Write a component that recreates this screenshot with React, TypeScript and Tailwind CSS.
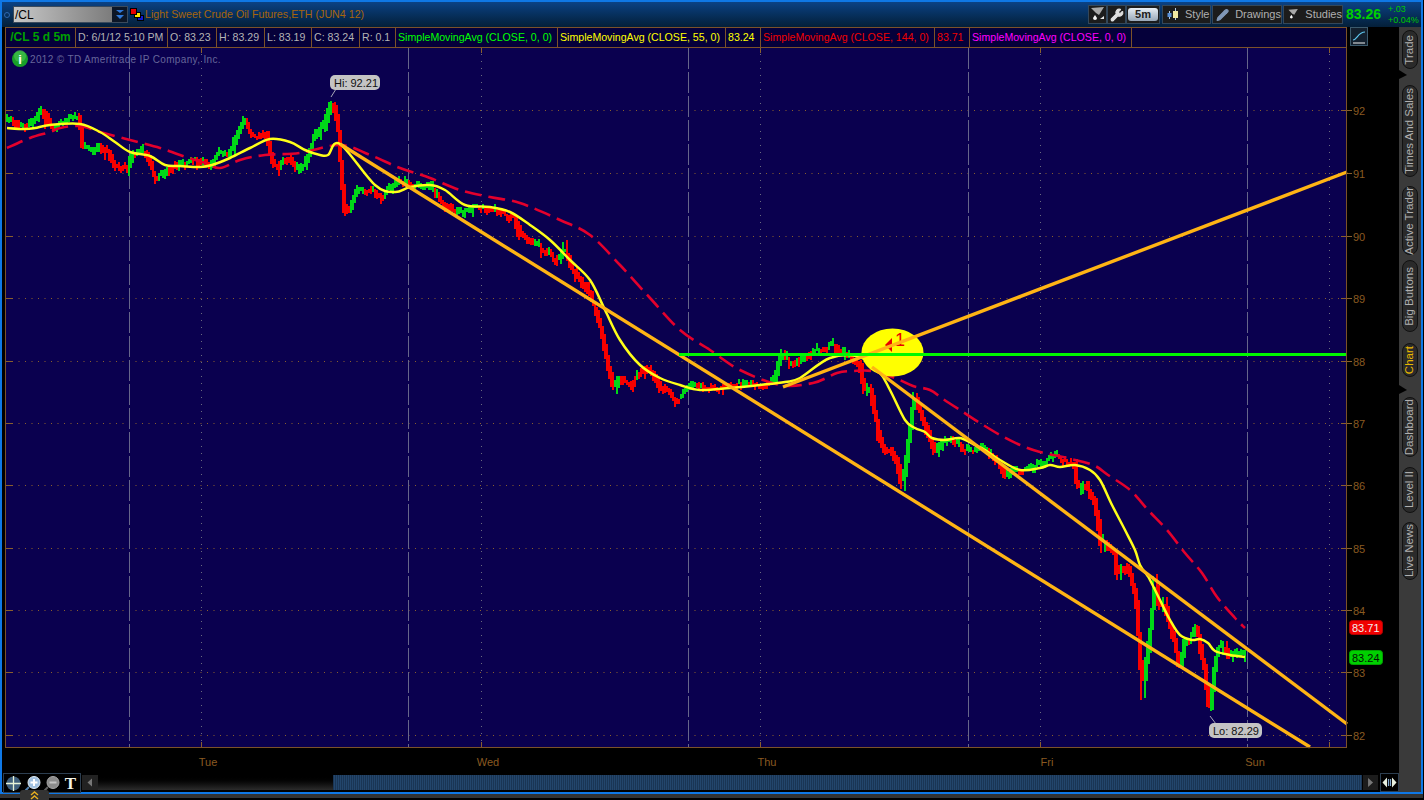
import { Pencil, Wrench } from "lucide-react";

const priceKeys: [number, number][] = [
  [7,122],[12,118],[20,127],[25,124],[32,122],[36,118],[43,112],[48,122],[52,129],[60,123],[75,120],[80,122],[83,150],[92,152],[100,143],[108,147],[115,162],[128,168],[133,155],[140,152],[148,158],[155,178],[163,175],[172,163],[180,166],[195,160],[205,162],[210,165],[218,155],[230,153],[235,140],[245,120],[252,130],[262,132],[268,135],[272,160],[278,165],[285,158],[290,160],[297,170],[305,165],[315,140],[325,125],[332,98],[338,115],[342,170],[345,205],[350,210],[358,190],[372,190],[385,195],[395,185],[400,180],[410,185],[430,190],[445,205],[460,215],[475,207],[490,208],[505,213],[515,215],[520,235],[535,245],[545,250],[560,262],[565,245],[570,262],[590,295],[596,310],[602,330],[610,375],[615,390],[620,375],[630,380],[640,370],[650,365],[660,385],[675,397],[685,395],[695,385],[710,385],[730,385],[750,383],[775,382],[782,355],[790,365],[800,360],[815,350],[832,345],[840,352],[850,358],[860,362],[865,395],[870,385],[880,435],[885,450],[890,445],[897,460],[903,490],[908,450],[915,395],[920,410],[928,430],[935,455],[942,445],[950,440],[965,450],[985,452],[1000,465],[1008,480],[1015,470],[1030,470],[1045,462],[1058,455],[1075,465],[1078,490],[1085,480],[1095,500],[1100,530],[1102,555],[1105,540],[1115,550],[1118,575],[1122,560],[1130,570],[1137,600],[1143,695],[1148,650],[1152,620],[1155,578],[1160,610],[1165,600],[1170,625],[1175,640],[1180,670],[1185,640],[1190,640],[1197,628],[1200,645],[1205,670],[1210,716],[1215,670],[1218,650],[1225,645],[1230,660],[1238,655],[1245,658],
];

const sma55: [number, number][] = [
  [7,128],[25,129],[35,128],[50,125],[80,124],[100,132],[115,142],[130,152],[150,156],[165,165],[180,166],[200,167],[212,165],[230,158],[250,148],[270,139],[290,142],[305,150],[320,155],[328,155],[340,144],[375,185],[395,192],[410,187],[430,185],[445,190],[465,205],[490,207],[510,212],[530,225],[550,240],[570,260],[590,280],[605,310],[620,340],[640,365],[660,378],[680,385],[700,390],[730,388],[760,385],[785,382],[800,378],[830,358],[860,357],[880,373],[890,390],[905,420],[915,428],[925,432],[932,438],[945,440],[960,438],[975,445],[985,450],[1000,460],[1020,470],[1040,468],[1050,465],[1060,467],[1075,465],[1090,470],[1100,480],[1112,505],[1125,530],[1135,550],[1140,565],[1147,575],[1150,580],[1160,600],[1170,620],[1180,635],[1192,640],[1200,639],[1208,643],[1215,651],[1230,655],[1245,657],
];

const sma144: [number, number][] = [
  [7,148],[30,138],[50,132],[60,128],[80,126],[100,132],[130,140],[160,148],[180,155],[205,163],[220,168],[240,160],[265,155],[300,153],[340,145],[370,155],[400,168],[430,178],[460,190],[490,197],[520,203],[560,220],[590,235],[620,265],[650,298],[680,330],[710,350],[740,370],[780,385],[813,383],[837,373],[853,371],[872,371],[895,378],[913,386],[930,390],[943,399],[963,412],[980,423],[1000,435],[1020,445],[1040,452],[1067,458],[1093,465],[1108,475],[1130,490],[1148,510],[1167,530],[1185,553],[1202,573],[1217,597],[1235,618],[1245,628],
];

const gridPrices = [
  { label: "92", y: 110 },
  { label: "91", y: 173 },
  { label: "90", y: 236 },
  { label: "89", y: 298 },
  { label: "88", y: 361 },
  { label: "87", y: 423 },
  { label: "86", y: 485 },
  { label: "85", y: 548 },
  { label: "84", y: 610 },
  { label: "83", y: 672 },
  { label: "82", y: 735 },
];

const dayLines = [129, 408, 688, 968, 1247];
const noonLines = [201, 481, 760, 1040, 1329];
const days = [
  { label: "Tue", x: 208 },
  { label: "Wed", x: 488 },
  { label: "Thu", x: 767 },
  { label: "Fri", x: 1047 },
  { label: "Sun", x: 1255 },
];

function interp(keys: [number, number][], x: number) {
  if (x <= keys[0][0]) return keys[0][1];
  for (let i = 1; i < keys.length; i++) {
    if (x <= keys[i][0]) {
      const [x0, y0] = keys[i - 1];
      const [x1, y1] = keys[i];
      return y0 + ((y1 - y0) * (x - x0)) / (x1 - x0);
    }
  }
  return keys[keys.length - 1][1];
}

// catmull-rom through the hand-read points, the averages are smooth in the picture
function toCurve(keys: [number, number][]) {
  let d = `M${keys[0][0]} ${keys[0][1]}`;
  for (let i = 0; i < keys.length - 1; i++) {
    const p0 = keys[Math.max(i - 1, 0)];
    const p1 = keys[i];
    const p2 = keys[i + 1];
    const p3 = keys[Math.min(i + 2, keys.length - 1)];
    const c1x = p1[0] + (p2[0] - p0[0]) / 6;
    const c1y = p1[1] + (p2[1] - p0[1]) / 6;
    const c2x = p2[0] - (p3[0] - p1[0]) / 6;
    const c2y = p2[1] - (p3[1] - p1[1]) / 6;
    d += `C${c1x.toFixed(1)} ${c1y.toFixed(1)} ${c2x.toFixed(1)} ${c2y.toFixed(1)} ${p2[0]} ${p2[1]}`;
  }
  return d;
}

// fake OHLC bars walked along the hand-read price curve
function buildBars() {
  let seed = 71;
  const rand = () => {
    seed = (seed * 16807) % 2147483647;
    return seed / 2147483647;
  };
  let drift = 0;
  let red = "";
  let green = "";
  for (let x = 7; x <= 1245; x += 2) {
    drift = drift * 0.72 + (rand() - 0.5) * 6;
    const a = interp(priceKeys, x - 2);
    const b = interp(priceKeys, x + 2);
    const spike = rand() < 0.1 ? rand() * 7 : 0;
    const top = Math.min(a, b) + drift - 1 - rand() * 3;
    const bottom = Math.max(a, b) + drift + 1 + rand() * 3 + spike;
    const seg = `M${x} ${top.toFixed(0)}V${bottom.toFixed(0)}`;
    if (b - a + drift * 1.5 < 0) green += seg;
    else red += seg;
  }
  return { red, green };
}

const bars = buildBars();

const infoCells = [
  { text: "D: 6/1/12 5:10 PM", color: "text-[#b4b4b4]", width: "w-[92px]" },
  { text: "O: 83.23", color: "text-[#b4b4b4]", width: "w-[49px]" },
  { text: "H: 83.29", color: "text-[#b4b4b4]", width: "w-[48px]" },
  { text: "L: 83.19", color: "text-[#b4b4b4]", width: "w-[47px]" },
  { text: "C: 83.24", color: "text-[#b4b4b4]", width: "w-[48px]" },
  { text: "R: 0.1", color: "text-[#b4b4b4]", width: "w-[36px]" },
  { text: "SimpleMovingAvg (CLOSE, 0, 0)", color: "text-[#00ff00]", width: "w-[162px]" },
  { text: "SimpleMovingAvg (CLOSE, 55, 0)", color: "text-[#ffff00]", width: "w-[168px]" },
  { text: "83.24", color: "text-[#ffff00]", width: "w-[35px]" },
  { text: "SimpleMovingAvg (CLOSE, 144, 0)", color: "text-[#f00000]", width: "w-[174px]" },
  { text: "83.71", color: "text-[#f00000]", width: "w-[35px]" },
  { text: "SimpleMovingAvg (CLOSE, 0, 0)", color: "text-[#ff00ff]", width: "w-[162px]" },
];

const tabs = [
  { label: "Trade", cls: "mt-[3px] h-[39px]" },
  { label: "Times And Sales", cls: "mt-[16px] h-[92px]" },
  { label: "Active Trader", cls: "mt-[9px] h-[69px]" },
  { label: "Big Buttons", cls: "mt-[5px] h-[72px]" },
  { label: "Chart", cls: "mt-[11px] h-[34px]", active: true },
  { label: "Dashboard", cls: "mt-[20px] h-[60px]" },
  { label: "Level II", cls: "mt-[10px] h-[46px]" },
  { label: "Live News", cls: "mt-[9px] h-[58px]" },
];

function ToolButton({ label, width, icon }: { label: string; width: string; icon: React.ReactNode }) {
  return (
    <div className={`${width} h-[19px] flex items-center gap-[6px] pl-[3px] bg-[#1c1c1c] border border-[#33475a] text-[#b0b0b0] text-[11px]`}>
      {icon}
      <span>{label}</span>
    </div>
  );
}

function Flask({ arrows }: { arrows?: boolean }) {
  return (
    <svg width="17" height="15" viewBox="0 0 17 15">
      <polygon points="2,1 15,0 10,8 7,6" fill="#a8a8a8" />
      <path d="M6 8 L8 11 A2 2 0 1 1 4 11 Z" fill="#f4f4f4" />
      {arrows && <path d="M11 12 L15 12 L15 9 Z" fill="#e8e8e8" />}
    </svg>
  );
}

function Chart() {
  return (
    <svg width="1397" height="728" viewBox="2 47 1397 728" className="block" fontFamily="'Liberation Sans', sans-serif">
      <rect x="5" y="47" width="1342" height="700" fill="#0a004f" />

      {gridPrices.map((p) => (
        <g key={p.label}>
          <line x1="12" x2="1340" y1={p.y + 0.5} y2={p.y + 0.5} stroke="#8a5f2c" strokeDasharray="1 5.5" />
          <line x1="6" x2="12" y1={p.y + 0.5} y2={p.y + 0.5} stroke="#8a5f2c" />
          <line x1="1341" x2="1352" y1={p.y + 0.5} y2={p.y + 0.5} stroke="#8a5f2c" />
          <text x="1353" y={p.y + 4.5} fontSize="11" fill="#8a5a20">{p.label}</text>
        </g>
      ))}
      {dayLines.map((x) => (
        <line key={x} x1={x + 0.5} x2={x + 0.5} y1="48" y2="747" stroke="#66668a" strokeDasharray="21 3" />
      ))}
      {noonLines.map((x) => (
        <g key={x}>
          <line x1={x + 0.5} x2={x + 0.5} y1="54" y2="741" stroke="#6a6a80" strokeDasharray="1 6" />
          <line x1={x + 0.5} x2={x + 0.5} y1="47" y2="53" stroke="#8a5f2c" />
          <line x1={x + 0.5} x2={x + 0.5} y1="742" y2="747" stroke="#8a5f2c" />
        </g>
      ))}

      <path d={bars.red} stroke="#f80000" strokeWidth="2" shapeRendering="crispEdges" />
      <path d={bars.green} stroke="#00d818" strokeWidth="2" shapeRendering="crispEdges" />

      <path d={toCurve(sma144)} fill="none" stroke="#e4002c" strokeWidth="2.6" strokeDasharray="17 7" />
      <path d={toCurve(sma55)} fill="none" stroke="#ffff18" strokeWidth="2.5" strokeLinejoin="round" />

      <ellipse cx="892.5" cy="352.5" rx="31" ry="24" fill="#ffff00" />
      <polygon points="885,345 892,338 892,352" fill="#e80000" />
      <text x="895" y="346" fontSize="18" fill="#e80000">1</text>

      <g stroke="#ffb414" strokeWidth="3.4" fill="none">
        <line x1="340" y1="144" x2="1310" y2="747" />
        <line x1="872" y1="367" x2="1347" y2="724" />
        <line x1="783" y1="387" x2="1347" y2="172" />
      </g>
      <line x1="679" y1="354.5" x2="1347" y2="354.5" stroke="#00f800" strokeWidth="3" />

      <rect x="5.5" y="47.5" width="1341" height="700" fill="none" stroke="#7c5229" />

      <circle cx="20" cy="59" r="8" fill="#18a028" />
      <circle cx="20" cy="56" r="6" fill="#52c85a" opacity="0.55" />
      <text x="20" y="64" textAnchor="middle" fontSize="13" fontWeight="700" fill="#fff">i</text>
      <text x="30" y="63" fontSize="10" letterSpacing="0.35" fill="#66669a">2012 © TD Ameritrade IP Company, Inc.</text>

      <line x1="331" y1="97" x2="336" y2="89" stroke="#a8a8b8" />
      <rect x="330" y="75" width="50" height="15" rx="5" fill="#c4c4c4" />
      <text x="334" y="86.5" fontSize="11" fill="#101010">Hi: 92.21</text>

      <line x1="1210" y1="716" x2="1216" y2="724" stroke="#a8a8b8" />
      <rect x="1209" y="723" width="53" height="15" rx="5" fill="#c4c4c4" />
      <text x="1213" y="734.5" fontSize="11" fill="#101010">Lo: 82.29</text>

      <rect x="1349.5" y="620.5" width="33" height="14" rx="3" fill="#f00000" stroke="#b00000" />
      <text x="1352" y="631.5" fontSize="11" fill="#f0f0f0">83.71</text>
      <rect x="1349.5" y="650.5" width="33" height="14" rx="3" fill="#00d000" stroke="#00a000" />
      <text x="1352" y="661.5" fontSize="11" fill="#041004">83.24</text>

      {days.map((d) => (
        <text key={d.label} x={d.x} y="766" textAnchor="middle" fontSize="11" fill="#8a5a20">{d.label}</text>
      ))}
    </svg>
  );
}

export default function App() {
  return (
    <div className="relative w-[1424px] h-[800px] overflow-hidden bg-black font-['Liberation_Sans',sans-serif]">
      <div className="w-[1423px] h-[794px] flex flex-col border-2 border-[#0f78e6]">
        {/* Symbol bar */}
        <div className="h-[25px] flex items-center bg-gradient-to-b from-[#0b4285] to-[#041f39]">
          <div className="ml-[2px] w-[6px] h-[6px] rounded-full border border-[#2f68b0]" />
          <div className="ml-[3px] w-[115px] h-[17px] flex border border-[#3a4a5c]">
            <div className="flex-1 flex items-center pl-[1px] bg-gradient-to-r from-[#c8c8c8] to-[#7c7c7c] text-[12px] text-black">/CL</div>
            <div className="w-[15px] flex items-center justify-center bg-[#0c1626]">
              <svg width="10" height="11" viewBox="0 0 10 11">
                <path d="M1 1 L5 4 L9 1 Z M1 6 L5 10 L9 6 Z" fill="#2f78d8" />
              </svg>
            </div>
          </div>
          <svg width="14" height="13" viewBox="0 0 14 13" className="ml-[2px]">
            <rect x="7.5" y="7.5" width="6" height="5" fill="#1018d0" stroke="#000" />
            <rect x="4.5" y="4.5" width="6" height="5" fill="#ffe800" stroke="#000" />
            <rect x="0.5" y="0.5" width="6" height="6" fill="#e80000" stroke="#000" />
          </svg>
          <span className="ml-[1px] text-[10.7px] text-[#a8650c]">Light Sweet Crude Oil Futures,ETH (JUN4 12)</span>

          <div className="ml-auto flex items-center">
            <div className="w-[19px] h-[19px] flex items-center justify-center bg-[#1c1c1c] border border-[#33475a]"><Flask arrows /></div>
            <div className="w-[19px] h-[19px] flex items-center justify-center bg-[#1c1c1c] border border-[#33475a]">
              <Wrench size={14} className="text-[#e0e0e0] fill-[#e0e0e0]" />
            </div>
            <div className="w-[34px] h-[19px] flex items-center justify-center bg-[#1c1c1c] border border-[#33475a]">
              <div className="w-[30px] h-[13px] rounded-[3px] bg-gradient-to-b from-[#e8eef4] to-[#98a8b8] text-center text-[11px] leading-[13px] font-bold text-[#202020]">5m</div>
            </div>
            <div className="ml-[2px] flex gap-px">
              <ToolButton
                label="Style"
                width="w-[49px]"
                icon={
                  <svg width="13" height="13" viewBox="0 0 13 13">
                    <path d="M3.5 3V11M9.5 0V12" stroke="#b0c8e0" />
                    <rect x="1.5" y="5" width="4" height="4" fill="#5890d8" />
                    <rect x="7" y="3" width="5" height="7" fill="#f0e8a0" />
                  </svg>
                }
              />
              <ToolButton label="Drawings" width="w-[70px]" icon={<Pencil size={14} className="text-[#8098b8] fill-[#8098b8]" />} />
              <ToolButton label="Studies" width="w-[60px]" icon={<Flask />} />
            </div>
            <span className="ml-[3px] w-[42px] text-[14px] font-bold text-[#00d000]">83.26</span>
            <div className="w-[33px] text-[9px] leading-[10.5px] text-[#00c800]">
              <div>+.03</div>
              <div>+0.04%</div>
            </div>
          </div>
        </div>

        <div className="flex flex-1">
          <div className="w-[1397px] flex flex-col">
            {/* Study readouts */}
            <div className="h-[20px] flex">
              <div className="ml-[3px] w-[1342px] flex border-t border-x border-[#7c5229] bg-[#05003a] text-[10.6px] leading-[19px] whitespace-nowrap">
                <div className="w-[70px] text-center text-[12px] font-bold text-[#00a000] border-r border-[#7c5229]">/CL 5 d 5m</div>
                {infoCells.map((cell, i) => (
                  <div key={i} className={`${cell.width} pl-[2px] ${cell.color} border-r border-[#7c5229]`}>{cell.text}</div>
                ))}
              </div>
              <div className="ml-[3px] w-[18px] h-[19px] flex items-center justify-center bg-[#13202e] border border-[#3c5a6c]">
                <svg width="14" height="14" viewBox="0 0 14 14">
                  <path d="M1 10 C5 10 6 2 13 2" fill="none" stroke="#60c8f0" strokeWidth="1.2" />
                  <path d="M1 13H13" stroke="#f0f0f0" />
                </svg>
              </div>
            </div>

            <Chart />

            {/* Bottom scroller */}
            <div className="h-[17px] flex items-start">
              <div className="ml-[1px] -mt-[2px] flex border border-[#2c3e50] bg-black">
                <div className="w-[19px] h-[18px] flex items-center justify-center">
                  <svg width="17" height="17" viewBox="0 0 17 17">
                    <circle cx="8.5" cy="8.5" r="7" fill="#40607c" />
                    <path d="M8.5 1V16M1 8.5H16" stroke="#e8f4d8" strokeWidth="1.3" />
                  </svg>
                </div>
                <div className="w-[19px] h-[18px] flex items-center justify-center">
                  <svg width="17" height="17" viewBox="0 0 17 17">
                    <path d="M5 12L1.5 15.5" stroke="#5080b0" strokeWidth="2" />
                    <circle cx="10" cy="7.5" r="6" fill="#a0c0e0" stroke="#e0ecf4" />
                    <path d="M10 4V11M6.5 7.5H13.5" stroke="#fff" strokeWidth="2" />
                  </svg>
                </div>
                <div className="w-[19px] h-[18px] flex items-center justify-center">
                  <svg width="17" height="17" viewBox="0 0 17 17">
                    <path d="M5 12L1.5 15.5" stroke="#606060" strokeWidth="2" />
                    <circle cx="10" cy="7.5" r="6" fill="#8c8c8c" stroke="#a8a8a8" />
                    <path d="M6.5 7.5H13.5" stroke="#c4c4c4" strokeWidth="2" />
                  </svg>
                </div>
                <div className="w-[19px] h-[18px] flex items-center justify-center text-[17px] leading-[17px] font-bold text-[#f4f4e8] font-['Liberation_Serif',serif]">T</div>
              </div>
              <div className="ml-[1px] w-[16px] h-[15px] flex items-center justify-center bg-[#222]">
                <div className="w-[5px] h-[9px] bg-[#777] [clip-path:polygon(100%_0,0_50%,100%_100%)]" />
              </div>
              <div className="w-[236px] h-[15px] bg-gradient-to-b from-[#000] to-[#2c2c2c]" />
              <div className="w-[1031px] h-[15px] bg-[#1a3554] bg-[repeating-linear-gradient(90deg,#1a3554_0px,#1a3554_1px,#23466c_1px,#23466c_2px)]" />
              <div className="ml-px w-[15px] h-[15px] flex items-center justify-center bg-[#1c1c1c]">
                <div className="w-[5px] h-[9px] bg-[#777] [clip-path:polygon(0_0,100%_50%,0_100%)]" />
              </div>
              <div className="ml-[2px] -mt-[2px] w-[19px] h-[19px] flex items-center justify-center border border-[#2c3e50]">
                <svg width="15" height="11" viewBox="0 0 15 11">
                  <path d="M5 0.5V10.5L0.5 5.5Z M10 0.5V10.5L14.5 5.5Z" fill="#e8f0e0" />
                  <path d="M6.5 2V9M8.5 2V9" stroke="#80a8d0" strokeWidth="1.2" />
                </svg>
              </div>
            </div>
          </div>

          {/* Side tabs */}
          <div className="relative w-[22px] flex flex-col items-center bg-[#3a3a3a]">
            {tabs.map((tab) => (
              <div
                key={tab.label}
                className={`${tab.cls} w-[16px] flex items-center justify-center rounded-[8px] bg-[#2a2a2a] border border-[#111] text-[11.5px] ${tab.active ? "text-[#e8b800]" : "text-[#b0b0b0]"}`}
              >
                <span className="[writing-mode:vertical-rl] rotate-180 whitespace-nowrap">{tab.label}</span>
              </div>
            ))}
            <div className="absolute left-0 top-[43px] w-[8px] h-[9px] bg-black [clip-path:polygon(0_0,100%_55%,0_100%)]" />
            <div className="absolute left-0 top-[358px] w-[8px] h-[9px] bg-black [clip-path:polygon(0_0,100%_55%,0_100%)]" />
          </div>
        </div>
      </div>

      {/* Strip under the window */}
      <div className="relative h-[4px] w-[1423px] bg-[#333]">
        <div className="absolute left-[20px] -top-[4px] w-[29px] h-[10px] flex justify-center rounded-t-[3px] bg-[#333]">
          <svg width="9" height="10" viewBox="0 0 9 10">
            <path d="M1 5L4.5 2L8 5M1 9L4.5 6L8 9" fill="none" stroke="#e8b020" strokeWidth="1.4" />
          </svg>
        </div>
      </div>
    </div>
  );
}
